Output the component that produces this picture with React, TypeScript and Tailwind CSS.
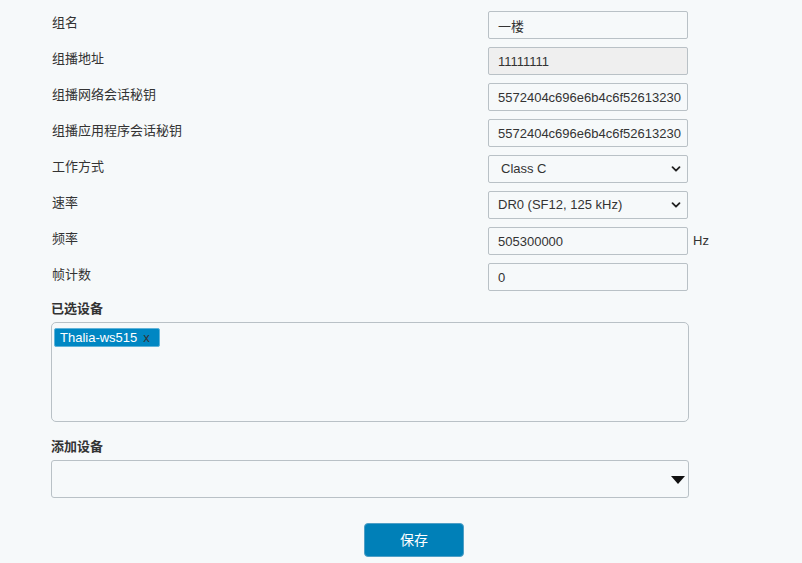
import { ChangeEvent, useState } from 'react';

const fieldFont = { fontFamily: '"Liberation Sans", "Noto Sans CJK SC", Arial, sans-serif' };

function Chevron() {
  return (
    <svg className="pointer-events-none absolute right-[7px] top-1/2 -translate-y-1/2 h-[10px] w-[10px]" viewBox="0 0 10 10">
      <path d="M1.5 3.2 5 6.7 8.5 3.2" fill="none" stroke="#222" strokeWidth="1.8" strokeLinecap="round" strokeLinejoin="round" />
    </svg>
  );
}

export default function App() {
  const [name, setName] = useState('一楼');
  const [nwk, setNwk] = useState('5572404c696e6b4c6f52613230');
  const [app, setApp] = useState('5572404c696e6b4c6f52613230');
  const [freq, setFreq] = useState('505300000');
  const [fcnt, setFcnt] = useState('0');

  const inputCls =
    'h-[28px] w-[200px] shrink-0 rounded-[2px] border border-[#b9c1c6] bg-[#f6f9fa] pl-[9px] pr-[1px] text-[13px] text-[#333] outline-none';

  const rows: { label: string; node: React.ReactNode }[] = [
    { label: '组名', node: <input className={inputCls} value={name} onChange={(e: ChangeEvent<HTMLInputElement>) => setName(e.target.value)} /> },
    { label: '组播地址', node: <input className={inputCls + ' !bg-[#efefef]'} value="11111111" disabled /> },
    { label: '组播网络会话秘钥', node: <input className={inputCls} value={nwk} onChange={(e) => setNwk(e.target.value)} /> },
    { label: '组播应用程序会话秘钥', node: <input className={inputCls} value={app} onChange={(e) => setApp(e.target.value)} /> },
    {
      label: '工作方式',
      node: (
        <div className="relative w-[200px] shrink-0">
          <select className={inputCls + ' appearance-none !pl-[12px]'} defaultValue="C">
            <option value="A">Class A</option>
            <option value="C">Class C</option>
          </select>
          <Chevron />
        </div>
      ),
    },
    {
      label: '速率',
      node: (
        <div className="relative w-[200px] shrink-0">
          <select className={inputCls + ' appearance-none'} defaultValue="0">
            <option value="0">DR0 (SF12, 125 kHz)</option>
            <option value="1">DR1 (SF11, 125 kHz)</option>
          </select>
          <Chevron />
        </div>
      ),
    },
    {
      label: '频率',
      node: (
        <div className="flex shrink-0 items-center gap-[5px]">
          <input className={inputCls} value={freq} onChange={(e) => setFreq(e.target.value)} />
          <span className="text-[13px] text-[#333]">Hz</span>
        </div>
      ),
    },
    { label: '帧计数', node: <input className={inputCls} value={fcnt} onChange={(e) => setFcnt(e.target.value)} /> },
  ];

  return (
    <div className="min-h-[563px] w-full overflow-hidden bg-[#f6f9fa] text-[#333]" style={fieldFont}>
      <div className="ml-[51px] w-[638px] pt-[11px]">
        <div className="flex flex-col gap-[8px]">
          {rows.map((r) => (
            <div key={r.label} className="flex items-start">
              <label className="w-[437px] shrink-0 pl-[1px] text-[13px] leading-[20px] mt-[2px]">{r.label}</label>
              {r.node}
            </div>
          ))}
        </div>

        <div className="mt-[9px] text-[13px] font-bold leading-[18px]">已选设备</div>
        <div className="mt-[4px] h-[100px] w-[638px] rounded-[5px] border border-[#b9c1c6] bg-[#f6f9fa] p-[2px]">
          <span className="inline-flex h-[19px] items-center rounded-[2px] border border-[#5fb3d9] bg-[#0087c3] pl-[5px] pr-[9px] text-[13px] mt-[3px]">
            <span className="text-white">Thalia-ws515</span>
            <span className="ml-[6px] text-[#333]">x</span>
          </span>
        </div>

        <div className="mt-[16px] text-[13px] font-bold leading-[18px]">添加设备</div>
        <div className="relative mt-[4px] h-[38px] w-[638px] rounded-[3px] border border-[#b9c1c6] bg-[#f6f9fa]">
          <svg className="absolute right-[3px] top-[15px] h-[8px] w-[14px]" viewBox="0 0 14 8">
            <path d="M0 0h14L7 8z" fill="#111" />
          </svg>
        </div>

        <div className="mt-[25px] flex">
          <button className="ml-[313px] h-[34px] w-[100px] rounded-[4px] border border-[#4f9fc6] bg-[#0080b8] text-[14px] text-white">
            保存
          </button>
        </div>
      </div>
    </div>
  );
}
